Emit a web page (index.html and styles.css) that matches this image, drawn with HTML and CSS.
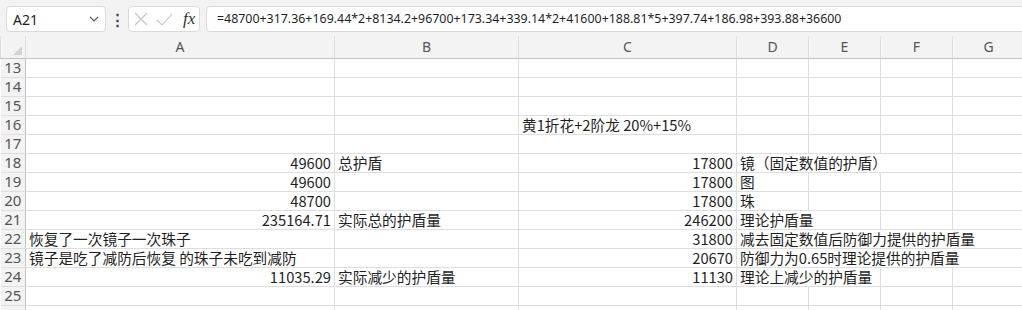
FILE: index.html
```html
<!DOCTYPE html>
<html lang="zh-CN">
<head>
    <meta charset="UTF-8">
    <title>护盾计算</title>
    <link rel="stylesheet" href="styles.css">
</head>
<body>
    <div class="toolbar">
        <div class="namebox">
            <span>A21</span>
            <svg class="chevron" width="10" height="6" viewBox="0 0 10 6"><path d="M1 1l4 4 4-4" fill="none" stroke="#555" stroke-width="1.1"/></svg>
        </div>
        <div class="dots">⋮</div>
        <div class="fxbox">
            <svg width="14" height="14" viewBox="0 0 14 14"><path d="M1 1l12 12M13 1L1 13" stroke="#c4c4c4" stroke-width="1.1"/></svg>
            <svg width="17" height="13" viewBox="0 0 17 13"><path d="M1 7l5 5L16 1" fill="none" stroke="#c4c4c4" stroke-width="1.1"/></svg>
            <span class="fx">fx</span>
        </div>
        <div class="formula">=48700+317.36+169.44*2+8134.2+96700+173.34+339.14*2+41600+188.81*5+397.74+186.98+393.88+36600</div>
    </div>

    <table class="sheet">
        <colgroup>
            <col class="c-head">
            <col class="c-a">
            <col class="c-b">
            <col class="c-c">
            <col class="c-narrow">
            <col class="c-narrow">
            <col class="c-narrow">
            <col class="c-narrow">
        </colgroup>
        <thead>
            <tr>
                <th class="corner"><span class="tri"></span></th>
                <th>A</th><th>B</th><th>C</th><th>D</th><th>E</th><th>F</th><th>G</th>
            </tr>
        </thead>
        <tbody>
            <tr><th>13</th><td></td><td></td><td></td><td></td><td></td><td></td><td></td></tr>
            <tr><th>14</th><td></td><td></td><td></td><td></td><td></td><td></td><td></td></tr>
            <tr><th>15</th><td></td><td></td><td></td><td></td><td></td><td></td><td></td></tr>
            <tr><th>16</th><td></td><td></td><td>黄1折花+2阶龙 20%+15%</td><td></td><td></td><td></td><td></td></tr>
            <tr><th>17</th><td></td><td></td><td></td><td></td><td></td><td></td><td></td></tr>
            <tr><th>18</th><td class="num">49600</td><td>总护盾</td><td class="num">17800</td><td colspan="3">镜（固定数值的护盾）</td><td></td></tr>
            <tr><th>19</th><td class="num">49600</td><td></td><td class="num">17800</td><td>图</td><td></td><td></td><td></td></tr>
            <tr><th>20</th><td class="num">48700</td><td></td><td class="num">17800</td><td>珠</td><td></td><td></td><td></td></tr>
            <tr><th>21</th><td class="num">235164.71</td><td>实际总的护盾量</td><td class="num">246200</td><td colspan="2">理论护盾量</td><td></td><td></td></tr>
            <tr><th>22</th><td>恢复了一次镜子一次珠子</td><td></td><td class="num">31800</td><td colspan="4">减去固定数值后防御力提供的护盾量</td></tr>
            <tr><th>23</th><td>镜子是吃了减防后恢复 的珠子未吃到减防</td><td></td><td class="num">20670</td><td colspan="4">防御力为0.65时理论提供的护盾量</td></tr>
            <tr><th>24</th><td class="num">11035.29</td><td>实际减少的护盾量</td><td class="num">11130</td><td colspan="2">理论上减少的护盾量</td><td></td><td></td></tr>
            <tr><th>25</th><td></td><td></td><td></td><td></td><td></td><td></td><td></td></tr>
            <tr><th></th><td></td><td></td><td></td><td></td><td></td><td></td><td></td></tr>
        </tbody>
    </table>
</body>
</html>
```

FILE: styles.css
```css
:root{
    --chrome: #f3f3f3;
    --grid: #dedede;
    --head-line: #c3c3c3;
    --text: #1f1f1f;
    --head-text: #555;
}
*{
    box-sizing: border-box;
    margin: 0;
    padding: 0;
}
html,body{
    width: 1022px;
    height: 310px;
    overflow: hidden;
    background: #fff;
}
body{
    font-family: "Noto Sans CJK SC", "Noto Sans", sans-serif;
    color: var(--text);
}

/* formula bar */
.toolbar{
    height: 36px;
    background: var(--chrome);
    display: flex;
    align-items: flex-start;
    padding: 6px 0 0 6px;
}
.namebox{
    width: 100px;
    height: 26px;
    background: #fff;
    border: 1px solid #dadada;
    border-radius: 4px;
    display: flex;
    align-items: center;
    justify-content: space-between;
    padding: 0 6px 0 6px;
    font-family: "Noto Sans", sans-serif;
    font-size: 14px;
}
.dots{
    width: 22px;
    text-align: center;
    font-size: 15px;
    line-height: 26px;
    color: #444;
    font-weight: bold;
}
.fxbox{
    width: 72px;
    height: 26px;
    background: #fff;
    border: 1px solid #dadada;
    border-radius: 4px;
    display: flex;
    align-items: center;
    gap: 8px;
    padding-left: 5px;
}
.fx{
    font-family: "Liberation Serif", serif;
    font-style: italic;
    font-size: 17px;
    color: #333;
    margin-left: 2px;
}
.formula{
    flex: 1;
    margin-left: 6px;
    margin-right: -8px;
    height: 26px;
    background: #fff;
    border: 1px solid #dadada;
    border-radius: 4px;
    padding-left: 10px;
    font-family: "Noto Sans", sans-serif;
    font-size: 12.4px;
    line-height: 24px;
    white-space: nowrap;
}

/* grid */
.sheet{
    border-collapse: collapse;
    table-layout: fixed;
    width: 1024px;
}
.c-head{ width: 25px; }
.c-a{ width: 309px; }
.c-b{ width: 184px; }
.c-c{ width: 218px; }
.c-narrow{ width: 72px; }

.sheet th,.sheet td{
    border: 1px solid var(--grid);
    height: 19px;
    font-size: 14.7px;
    line-height: 17px;
    white-space: nowrap;
    overflow: visible;
    font-weight: 400;
}
.sheet td{
    padding: 0 3px;
    text-align: left;
}
.sheet td.num{
    text-align: right;
}
.sheet thead th{
    height: 22px;
    background: var(--chrome);
    color: var(--head-text);
    border-top: none;
    border-bottom: 1px solid var(--head-line);
    font-family: "Noto Sans", sans-serif;
    font-size: 14px;
}
.sheet tbody th{
    background: var(--chrome);
    color: var(--head-text);
    font-family: "Noto Sans", sans-serif;
    font-size: 15px;
    text-align: center;
    border-left: none;
    border-right: 1px solid var(--head-line);
}
.corner{
    position: relative;
    border-left: none;
}
.tri{
    position: absolute;
    right: 3px;
    bottom: 3px;
    width: 0;
    height: 0;
    border-left: 9px solid transparent;
    border-bottom: 9px solid #d2d2d2;
}
```
